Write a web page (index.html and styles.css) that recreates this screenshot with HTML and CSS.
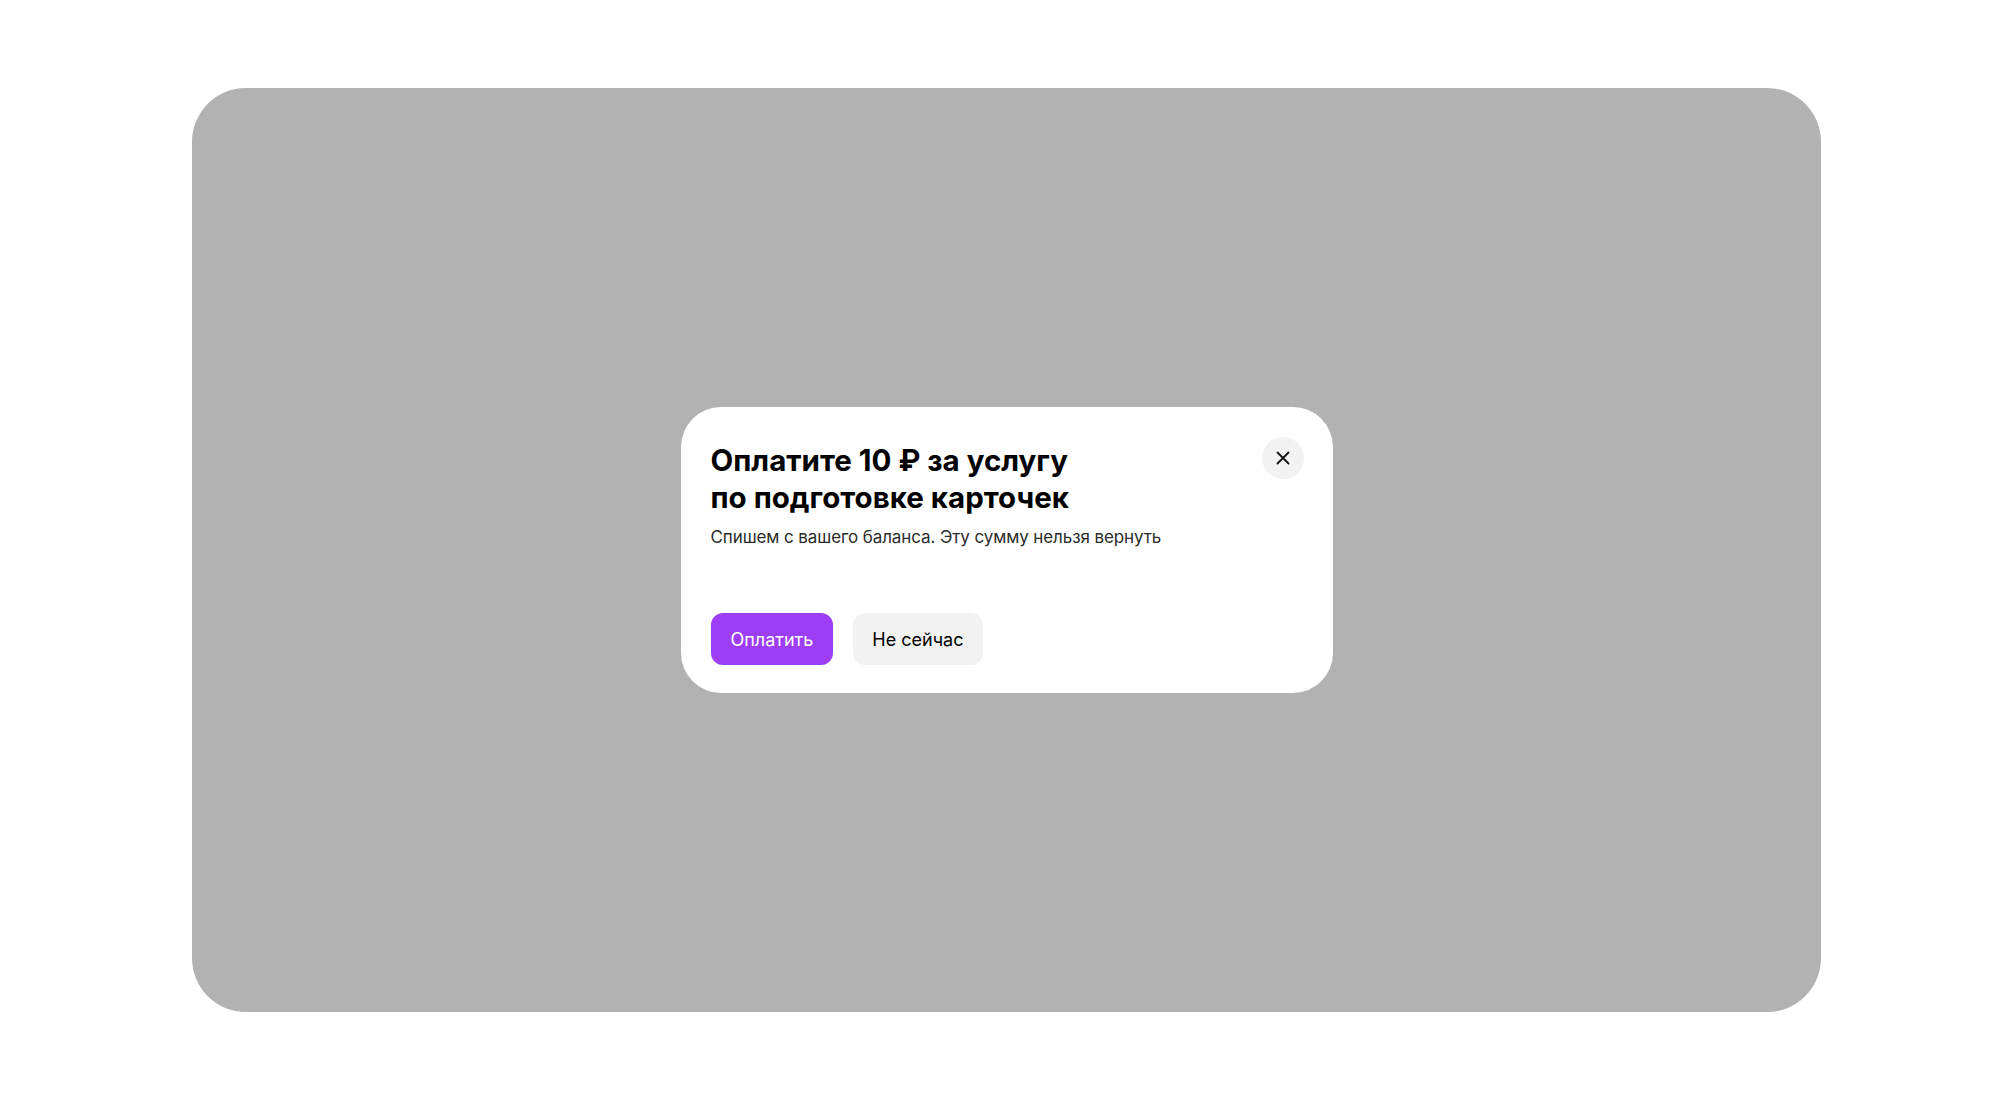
FILE: index.html
```html
<!DOCTYPE html>
<html lang="ru">
<head>
<meta charset="utf-8">
<title>Оплата</title>
<link rel="stylesheet" href="styles.css">
</head>
<body>
<div class="stage">
  <div class="backdrop">
    <div class="modal">
      <button class="close" aria-label="Закрыть">
        <svg width="14" height="14" viewBox="0 0 14 14"><path d="M1.5 1.5 L12.5 12.5 M12.5 1.5 L1.5 12.5" stroke="#111" stroke-width="1.8" stroke-linecap="round"/></svg>
      </button>
      <h1 class="title">Оплатите 10 ₽ за услугу<br>по подготовке карточек</h1>
      <p class="subtitle">Спишем с вашего баланса. Эту сумму нельзя вернуть</p>
      <div class="actions">
        <button class="btn btn-primary">Оплатить</button>
        <button class="btn btn-secondary">Не сейчас</button>
      </div>
    </div>
  </div>
</div>
</body>
</html>
```

FILE: styles.css
```css
html, body {
  margin: 0;
  padding: 0;
  background: #ffffff;
}
body {
  font-family: Inter, "Noto Sans", sans-serif;
  color: #000;
}
.stage {
  width: 2016px;
  height: 1101px;
  box-sizing: border-box;
  padding: 88px 0 0 192px;
}
.backdrop {
  width: 1629px;
  height: 924px;
  border-radius: 54px;
  background: #b2b2b3;
  display: flex;
  align-items: center;
  justify-content: center;
}
.modal {
  position: relative;
  box-sizing: border-box;
  width: 652px;
  height: 286px;
  padding: 35px 30px 28px 30px;
  background: #ffffff;
  border-radius: 40px;
  display: flex;
  flex-direction: column;
}
.close {
  position: absolute;
  top: 30px;
  right: 29px;
  width: 42px;
  height: 42px;
  border: none;
  border-radius: 50%;
  background: #f2f2f3;
  padding: 0;
  display: flex;
  align-items: center;
  justify-content: center;
}
.title {
  margin: 0;
  font-size: 29.5px;
  line-height: 37px;
  font-weight: 700;
  color: #000;
}
.subtitle {
  margin: 9px 0 0 0;
  font-size: 17px;
  line-height: 24px;
  font-weight: 400;
  letter-spacing: -0.1px;
  color: #2b2b2b;
}
.actions {
  margin-top: auto;
  display: flex;
  gap: 20px;
}
.btn {
  height: 52px;
  padding: 0 19px;
  border: none;
  border-radius: 12px;
  font-family: Inter, "Noto Sans", sans-serif;
  font-size: 18px;
  font-weight: 400;
}
.btn-primary {
  padding: 0 20px;
  background: #9b3ef6;
  color: #ffffff;
}
.btn-secondary {
  background: #f2f2f3;
  color: #000000;
}
```
